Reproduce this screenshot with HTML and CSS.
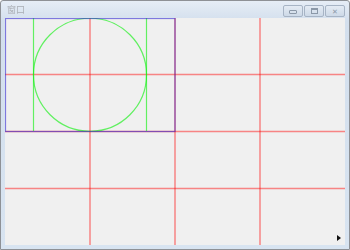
FILE: index.html
```html
<!DOCTYPE html>
<html lang="zh">
<head>
    <meta charset="UTF-8">
    <title>窗口</title>
    <link rel="stylesheet" href="styles.css">
</head>
<body>
    <div class="window">
        <div class="titlebar">
            <span class="title">窗口</span>
            <div class="buttons">
                <span class="btn"><i class="ico min"></i></span>
                <span class="btn"><i class="ico max"></i></span>
                <span class="btn"><i class="ico close">&#10005;</i></span>
            </div>
        </div>
        <div class="client">
            <svg class="canvas" width="340" height="227" viewBox="0 0 340 227">
                <g stroke="rgba(255,0,0,0.45)" stroke-width="1.5">
                    <line x1="85" y1="0" x2="85" y2="227"/>
                    <line x1="170" y1="0" x2="170" y2="227"/>
                    <line x1="255" y1="0" x2="255" y2="227"/>
                    <line x1="0" y1="56.5" x2="340" y2="56.5"/>
                    <line x1="0" y1="113.5" x2="340" y2="113.5"/>
                    <line x1="0" y1="170.5" x2="340" y2="170.5"/>
                </g>
                <g stroke="rgba(20,240,20,0.65)" stroke-width="1.2" fill="none">
                    <circle cx="85" cy="56.75" r="56.5"/>
                    <line x1="28.5" y1="0" x2="28.5" y2="113"/>
                    <line x1="141.5" y1="0" x2="141.5" y2="113"/>
                </g>
                <rect x="0.5" y="0.5" width="169.5" height="113" fill="none" stroke="rgba(50,40,210,0.6)" stroke-width="1.2"/>
            </svg>
            <span class="cursor"></span>
        </div>
    </div>
</body>
</html>
```

FILE: styles.css
```css
body {
    margin: 0;
    padding: 0;
    font-family: "Noto Sans CJK SC", "DejaVu Sans", sans-serif;
}

.window {
    width: 350px;
    height: 250px;
    box-sizing: border-box;
    border: 1px solid #8e9196;
    border-radius: 3px 3px 0 0;
    background: linear-gradient(#e6edf6, #d3dfed 20px, #d8e4f1);
    display: flex;
    flex-direction: column;
}

.titlebar {
    height: 17px;
    display: flex;
    align-items: flex-start;
    justify-content: space-between;
    padding: 0 4px 0 6px;
}

.title {
    margin-top: 4px;
    font-size: 9px;
    line-height: 10px;
    color: #a9adb3;
    filter: blur(0.4px);
}

.buttons {
    display: flex;
    gap: 1px;
    margin-top: 4px;
}

.btn {
    width: 18px;
    height: 10px;
    border: 1px solid #a7b4c5;
    border-radius: 2px;
    background: linear-gradient(#e4ebf4, #cdd9e7);
    display: flex;
    align-items: center;
    justify-content: center;
}

.ico {
    display: block;
    box-sizing: border-box;
    font-style: normal;
    color: #8b98a8;
}

.ico.min {
    width: 8px;
    height: 4px;
    border: 1px solid #8b98a8;
    border-radius: 1px;
    margin-top: 2px;
}

.ico.max {
    width: 7px;
    height: 6px;
    border: 1px solid #8b98a8;
    border-top-width: 2px;
}

.ico.close {
    font-size: 7px;
    line-height: 7px;
    font-weight: bold;
}

.client {
    position: relative;
    margin: 0 4px 4px 4px;
    height: 227px;
    background: #f0f0f0;
}

.canvas {
    display: block;
}

.cursor {
    position: absolute;
    right: 4px;
    bottom: 4px;
    width: 0;
    height: 0;
    border-top: 3px solid transparent;
    border-bottom: 3px solid transparent;
    border-left: 4px solid #111;
}
```
